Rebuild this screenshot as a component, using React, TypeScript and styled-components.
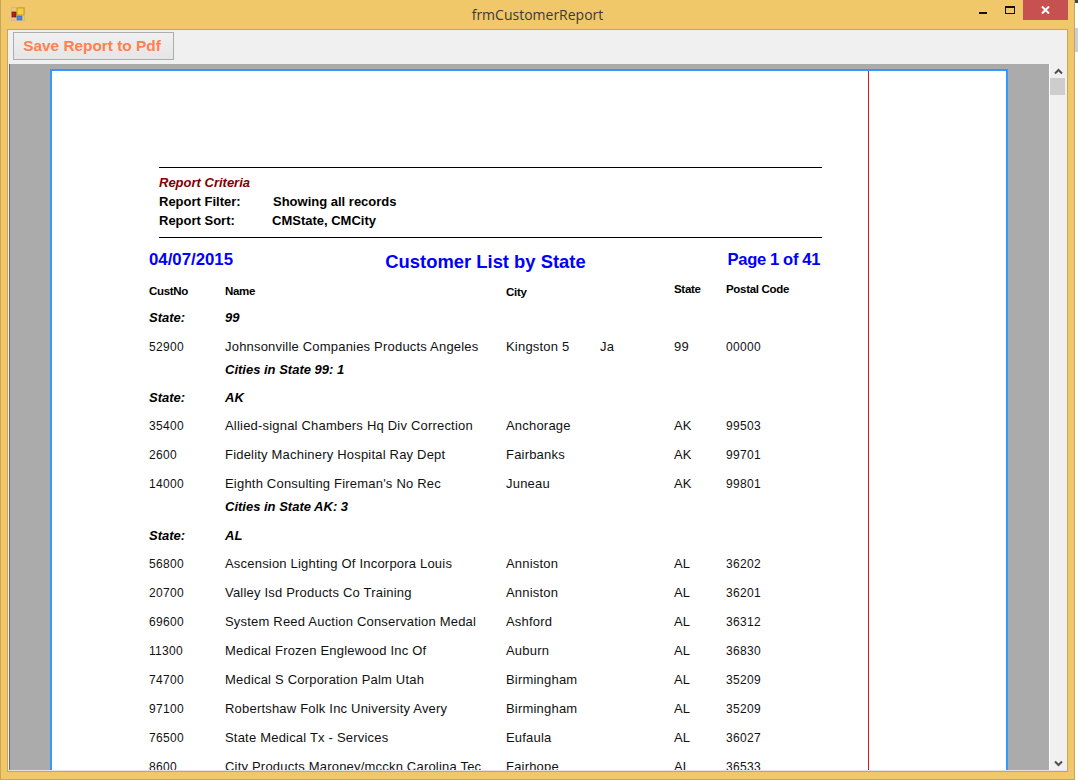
import React, { FC } from 'react'
import styled, { createGlobalStyle } from 'styled-components'

type DataRow = {
  no: string
  name: string
  city: string
  extra?: string
  state: string
  zip: string
}

type Group = {
  state: string
  rows: DataRow[]
  count?: number
  footerGap?: number
}

const groups: Group[] = [
  {
    state: '99',
    count: 1,
    footerGap: 5,
    rows: [{ no: '52900', name: 'Johnsonville Companies Products Angeles', city: 'Kingston 5', extra: 'Ja', state: '99', zip: '00000' }],
  },
  {
    state: 'AK',
    count: 3,
    footerGap: 6,
    rows: [
      { no: '35400', name: 'Allied-signal Chambers Hq Div Correction', city: 'Anchorage', state: 'AK', zip: '99503' },
      { no: '2600', name: 'Fidelity Machinery Hospital Ray Dept', city: 'Fairbanks', state: 'AK', zip: '99701' },
      { no: '14000', name: "Eighth Consulting Fireman's No Rec", city: 'Juneau', state: 'AK', zip: '99801' },
    ],
  },
  {
    state: 'AL',
    rows: [
      { no: '56800', name: 'Ascension Lighting Of Incorpora Louis', city: 'Anniston', state: 'AL', zip: '36202' },
      { no: '20700', name: 'Valley Isd Products Co Training', city: 'Anniston', state: 'AL', zip: '36201' },
      { no: '69600', name: 'System Reed Auction Conservation Medal', city: 'Ashford', state: 'AL', zip: '36312' },
      { no: '11300', name: 'Medical Frozen Englewood Inc Of', city: 'Auburn', state: 'AL', zip: '36830' },
      { no: '74700', name: 'Medical S Corporation Palm Utah', city: 'Birmingham', state: 'AL', zip: '35209' },
      { no: '97100', name: 'Robertshaw Folk Inc University Avery', city: 'Birmingham', state: 'AL', zip: '35209' },
      { no: '76500', name: 'State Medical Tx - Services', city: 'Eufaula', state: 'AL', zip: '36027' },
      { no: '8600', name: 'City Products Maroney/mcckn Carolina Tec', city: 'Fairhope', state: 'AL', zip: '36533' },
    ],
  },
]

const GlobalStyle = createGlobalStyle`
  html, body {
    margin: 0;
    height: 100%;
    overflow: hidden;
  }
  body {
    font-family: "Liberation Sans", Arial, sans-serif;
    background: #fff;
  }
`

const Screen = styled.div`
  width: 1078px;
  height: 780px;
  display: flex;
`

const Window = styled.div`
  width: 1075px;
  height: 780px;
  background: #f0c869;
  border: 1px solid #c9a557;
  border-top: 0;
  display: flex;
  flex-direction: column;
  padding: 0 6px 7px 6px;
  box-sizing: border-box;
  flex: none;
`

const TitleBar = styled.div`
  height: 29px;
  margin: 0 -6px;
  display: grid;
  grid-template-columns: 1fr auto 1fr;
  align-items: start;
  flex: none;
`

const AppIcon = styled.svg`
  width: 14px;
  height: 14px;
  margin: 7px 0 0 10px;
`

const TitleText = styled.div`
  margin-top: 6px;
  font-family: "Open Sans", "Liberation Sans", sans-serif;
  font-size: 14px;
  line-height: 18px;
  color: #3a3a3a;
`

const WindowButtons = styled.div`
  justify-self: end;
  padding-right: 6px;
  display: flex;
  align-items: flex-start;
`

const CaptionButton = styled.div<{ $low?: boolean }>`
  width: 27px;
  height: 20px;
  box-sizing: border-box;
  padding-top: ${p => (p.$low ? 6 : 0)}px;
  display: flex;
  align-items: center;
  justify-content: center;
`

const CloseButton = styled.div`
  width: 45px;
  height: 20px;
  background: #c75050;
  display: flex;
  align-items: center;
  justify-content: center;
`

const Client = styled.div`
  flex: 1;
  min-height: 0;
  border: 1px solid #c9a557;
  background: #f0f0f0;
  display: flex;
  flex-direction: column;
`

const Toolbar = styled.div`
  height: 34px;
  flex: none;
  padding: 2px 0 0 5px;
  box-sizing: border-box;
  background: #f0f0f0;
`

const SaveButton = styled.button`
  display: block;
  width: 161px;
  height: 28px;
  padding: 0 3px 0 0;
  border: 1px solid #adadad;
  background: linear-gradient(#f0f0f0, #e5e5e5);
  color: #ff7f50;
  font-family: "Liberation Sans", Arial, sans-serif;
  font-size: 15.4px;
  font-weight: 700;
`

const ViewerArea = styled.div`
  flex: 1;
  min-height: 0;
  display: flex;
  border-bottom: 1px solid #e3e3e3;
`

const Viewer = styled.div`
  flex: 1;
  min-width: 0;
  margin-left: 1px;
  background: #ababab;
  border-left: 1px solid #696969;
  padding: 5px 41px 0 40px;
  overflow: hidden;
`

const Page = styled.div`
  height: 900px;
  background: #fff;
  border: 2px solid #3399ff;
  position: relative;
  padding: 96px 0 0 97px;
`

const MarginLine = styled.div`
  position: absolute;
  top: 0;
  bottom: 0;
  left: 816px;
  width: 1px;
  background: #e0141e;
`

const Criteria = styled.div`
  width: 663px;
  height: 71px;
  margin-left: 10px;
  box-sizing: border-box;
  border-top: 1px solid #000;
  border-bottom: 1px solid #000;
  padding-top: 5px;
  font-size: 13px;
  font-weight: 700;
  color: #000;
`

const CriteriaTitle = styled.div`
  height: 19px;
  line-height: 19px;
  font-style: italic;
  color: #800000;
`

const CriteriaRow = styled.div`
  height: 19px;
  line-height: 19px;
  display: flex;
`

const CriteriaLabel = styled.span<{ $width: number }>`
  width: ${p => p.$width}px;
  flex: none;
`

const HeadingRow = styled.div`
  width: 671px;
  height: 39px;
  display: grid;
  grid-template-columns: 170px 1fr 170px;
  color: #0000ff;
  font-weight: 700;
`

const DateText = styled.div`
  padding-top: 12px;
  font-size: 16.8px;
  line-height: 20px;
`

const ReportTitle = styled.div`
  padding: 13px 0 0 2px;
  font-size: 18.4px;
  line-height: 22px;
  text-align: center;
`

const PageNumber = styled.div`
  padding-top: 12px;
  font-size: 16.6px;
  letter-spacing: -0.37px;
  line-height: 20px;
  text-align: right;
`

const Columns = styled.div<{ $height: number; $after?: number }>`
  display: grid;
  grid-template-columns: 76px 281px 94px 74px 52px 90px;
  width: 667px;
  height: ${p => p.$height}px;
  margin-bottom: ${p => p.$after || 0}px;
  align-items: center;
`

const HeaderCell = styled.div<{ $down?: number; $up?: number }>`
  font-size: 11.5px;
  font-weight: 700;
  letter-spacing: -0.3px;
  padding-top: ${p => p.$down || 0}px;
  padding-bottom: ${p => p.$up || 0}px;
`

const GroupCell = styled.div`
  font-size: 13px;
  font-weight: 700;
  font-style: italic;
  color: #000;
`

const Cell = styled.div`
  font-size: 13px;
  letter-spacing: 0.2px;
  color: #111;
  white-space: nowrap;
`

const NumberCell = styled(Cell)`
  font-size: 12px;
  letter-spacing: 0.3px;
`

const FooterRow = styled.div<{ $gap: number }>`
  height: 18px;
  line-height: 18px;
  margin-bottom: ${p => p.$gap}px;
  padding-left: 76px;
  font-size: 13px;
  font-weight: 700;
  font-style: italic;
  color: #000;
`

const ScrollBar = styled.div`
  width: 18px;
  flex: none;
  box-sizing: border-box;
  border-left: 1px solid #fff;
  background: #f0f0f0;
  display: flex;
  flex-direction: column;
  justify-content: space-between;
`

const ScrollTop = styled.div`
  display: flex;
  flex-direction: column;
`

const ArrowBox = styled.div`
  height: 14px;
  display: flex;
  align-items: center;
  justify-content: center;
`

const Thumb = styled.div`
  height: 17px;
  margin-right: 2px;
  background: #cdcdcd;
`

const DesktopEdge = styled.div`
  flex: 1;
  display: flex;
  flex-direction: column;
  background: #fff;
`

const EdgeTop = styled.div`
  height: 3px;
  background: #3c4654;
`

const EdgeBand = styled.div`
  height: 24px;
  margin-top: 25px;
  background: #c5cfe0;
`

const Arrow: FC<{ down?: boolean }> = ({ down }) => (
  <svg width="9" height="7" viewBox="0 0 9 7">
    <path
      d={down ? 'M1 1.5 L4.5 5 L8 1.5' : 'M1 5.5 L4.5 2 L8 5.5'}
      fill="none"
      stroke="#505050"
      strokeWidth="2"
    />
  </svg>
)

const GroupBlock: FC<{ group: Group; first: boolean }> = ({ group, first }) => (
  <>
    <Columns $height={first ? 26 : 27} $after={first ? 2 : 0}>
      <GroupCell>State:</GroupCell>
      <GroupCell>{group.state}</GroupCell>
    </Columns>
    {group.rows.map(row => (
      <Columns key={row.no} $height={29}>
        <NumberCell>{row.no}</NumberCell>
        <Cell>{row.name}</Cell>
        <Cell>{row.city}</Cell>
        <Cell>{row.extra}</Cell>
        <Cell>{row.state}</Cell>
        <NumberCell>{row.zip}</NumberCell>
      </Columns>
    ))}
    {group.count ? (
      <FooterRow $gap={group.footerGap || 0}>
        Cities in State {group.state}: {group.count}
      </FooterRow>
    ) : null}
  </>
)

const App: FC = () => (
  <Screen>
    <GlobalStyle />
    <Window>
      <TitleBar>
        <AppIcon viewBox="0 0 14 14">
          <rect x="0.5" y="0.5" width="13" height="13" fill="none" stroke="#c4bda6" />
          <rect x="6" y="1" width="7" height="7" fill="#f7cf3a" stroke="#b08a1e" strokeWidth="0.7" />
          <rect x="1" y="5" width="4" height="5" fill="#b3201c" stroke="#7a1210" strokeWidth="0.7" />
          <rect x="6" y="9" width="5" height="4" fill="#4a86e0" stroke="#2e5fa8" strokeWidth="0.5" />
        </AppIcon>
        <TitleText>frmCustomerReport</TitleText>
        <WindowButtons>
          <CaptionButton $low>
            <svg width="8" height="2" viewBox="0 0 8 2">
              <rect width="8" height="2" fill="#111" />
            </svg>
          </CaptionButton>
          <CaptionButton>
            <svg width="10" height="8" viewBox="0 0 10 8">
              <rect x="0.5" y="0.5" width="9" height="7" fill="none" stroke="#111" />
              <rect x="0" y="0" width="10" height="2" fill="#111" />
            </svg>
          </CaptionButton>
          <CloseButton>
            <svg width="9" height="8" viewBox="0 0 9 8">
              <path d="M1 0.5 L8 7.5 M8 0.5 L1 7.5" stroke="#fff" strokeWidth="2" />
            </svg>
          </CloseButton>
        </WindowButtons>
      </TitleBar>
      <Client>
        <Toolbar>
          <SaveButton>Save Report to Pdf</SaveButton>
        </Toolbar>
        <ViewerArea>
          <Viewer>
            <Page>
              <MarginLine />
              <Criteria>
                <CriteriaTitle>Report Criteria</CriteriaTitle>
                <CriteriaRow>
                  <CriteriaLabel $width={114}>Report Filter:</CriteriaLabel>
                  <span>Showing all records</span>
                </CriteriaRow>
                <CriteriaRow>
                  <CriteriaLabel $width={113}>Report Sort:</CriteriaLabel>
                  <span>CMState, CMCity</span>
                </CriteriaRow>
              </Criteria>
              <HeadingRow>
                <DateText>04/07/2015</DateText>
                <ReportTitle>Customer List by State</ReportTitle>
                <PageNumber>Page 1 of 41</PageNumber>
              </HeadingRow>
              <Columns $height={27}>
                <HeaderCell>CustNo</HeaderCell>
                <HeaderCell>Name</HeaderCell>
                <HeaderCell $down={2}>City</HeaderCell>
                <span />
                <HeaderCell $up={4}>State</HeaderCell>
                <HeaderCell $up={4}>Postal Code</HeaderCell>
              </Columns>
              {groups.map((group, index) => (
                <GroupBlock key={group.state} group={group} first={index === 0} />
              ))}
            </Page>
          </Viewer>
          <ScrollBar>
            <ScrollTop>
              <ArrowBox>
                <Arrow />
              </ArrowBox>
              <Thumb />
            </ScrollTop>
            <ArrowBox>
              <Arrow down />
            </ArrowBox>
          </ScrollBar>
        </ViewerArea>
      </Client>
    </Window>
    <DesktopEdge>
      <EdgeTop />
      <EdgeBand />
    </DesktopEdge>
  </Screen>
)

export default App
